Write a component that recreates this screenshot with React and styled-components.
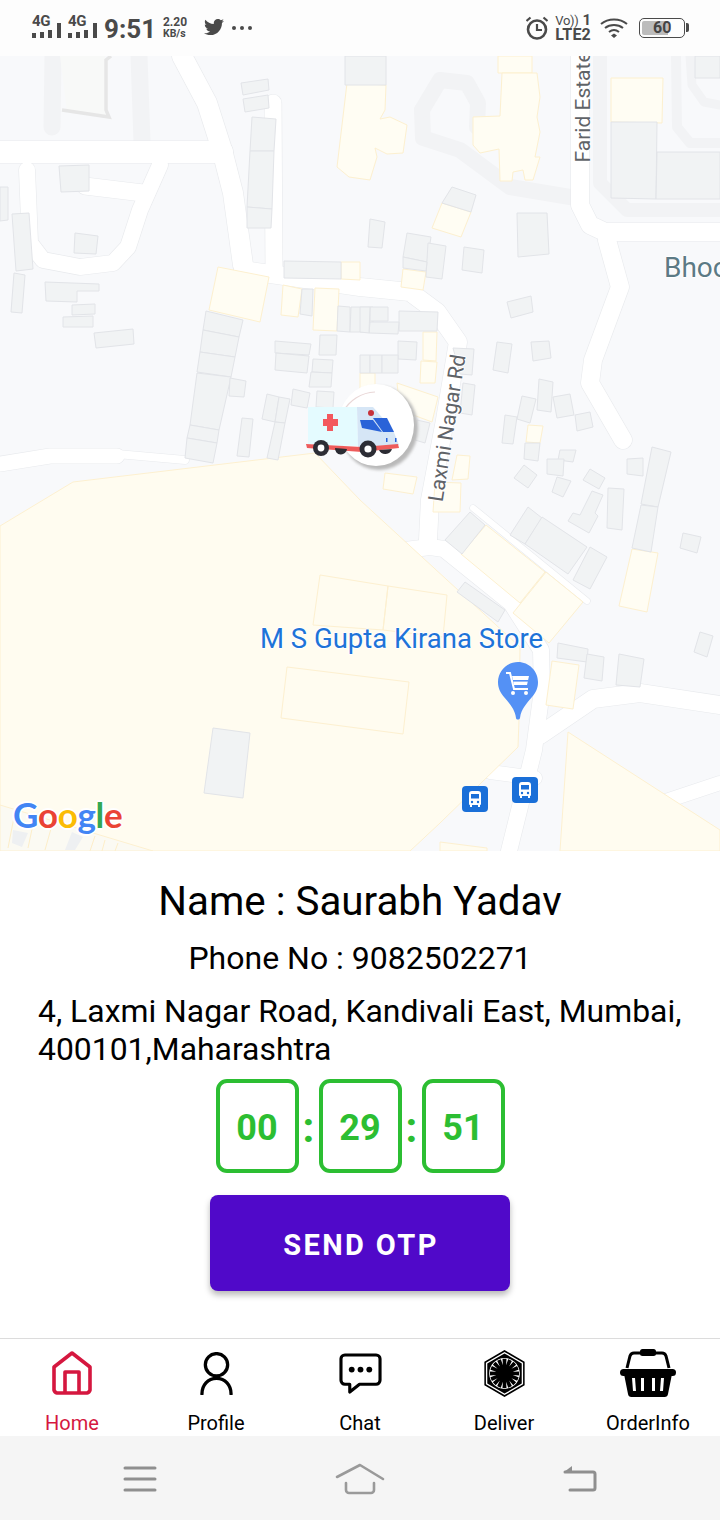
import React from "react";
import styled, { createGlobalStyle } from "styled-components";
import { FaTwitter, FaFirstOrder } from "react-icons/fa";

const Global = createGlobalStyle`
  html, body { margin: 0; padding: 0; background: #fff; }
  * { box-sizing: border-box; }
  body { font-family: Roboto, "Liberation Sans", sans-serif; }
`;

const Page = styled.div`
  width: 720px; height: 1520px; display: flex; flex-direction: column; overflow: hidden; background: #fff; color: #000;
`;

/* ---------- status bar ---------- */
const StatusBar = styled.div`
  height: 56px; flex: none; background: #fdfdfd; display: flex; justify-content: space-between; align-items: flex-start;
  padding: 0 35px 0 32px; color: #4a4a4a; font-weight: 700;
`;
const StatusGroup = styled.div`display: flex; align-items: flex-start; padding-top: ${p => p.$top || 0}px;`;
const SignalBox = styled.div`display: flex; align-items: flex-end; gap: 5px; height: 38px; margin-right: 7.4px;`;
const SignalLeft = styled.div`display: flex; flex-direction: column; width: 20px;`;
const SignalText = styled.span`font-size: 15px; line-height: 12px; letter-spacing: -0.4px;`;
const SmallBars = styled.div`display: flex; align-items: flex-end; justify-content: space-between; margin-top: 3px; height: 8px;`;
const Bar = styled.i`display: block; width: 3.6px; height: ${p => p.$h}px; background: #4a4a4a;`;
const Clock = styled.span`font-size: 26px; line-height: 30px; margin: 14px 0 0 0; width: 59px;`;
const Speed = styled.div`display: flex; flex-direction: column; font-size: 12px; line-height: 12px; width: 41px; margin-top: 16px;`;
const SpeedUnit = styled.span`font-size: 10.5px; line-height: 11px;`;
const Bird = styled.div`display: flex; margin-top: 17px; font-size: 20px; width: 28px;`;
const Dots = styled.div`display: flex; gap: 4px; margin-top: 26px;`;
const Dot = styled.i`display: block; width: 4px; height: 4px; border-radius: 50%; background: #4a4a4a;`;
const Net = styled.div`display: grid; grid-template-columns: auto auto; row-gap: 2px; margin: 15px 9px 0 7px; align-items: end;`;
const Volte = styled.span`font-size: 13px; font-weight: 400; line-height: 11px; letter-spacing: -0.3px;`;
const NetNum = styled.span`font-size: 15px; line-height: 11px; padding-left: 2px; text-align: right;`;
const Lte = styled.span`grid-column: 1 / span 2; font-size: 16px; line-height: 13px; letter-spacing: 0.2px;`;
const Battery = styled.div`
  width: 46px; height: 20px; margin: 18px 0 0 11px; border: 1.5px solid #4a4a4a; border-radius: 5px; padding: 2px;
  position: relative; display: flex;
  &::after { content: ""; position: absolute; right: -5px; top: 4px; width: 3px; height: 9px; background: #4a4a4a; border-radius: 0 2px 2px 0; }
`;
const BatteryFill = styled.div`
  width: 26px; background: #bcbcbc; border-radius: 2px 0 0 2px; font-size: 16px; line-height: 13px; display: flex;
  span { padding-left: 11px; color: #444; }
`;

/* ---------- map ---------- */
const MapArea = styled.div`height: 795px; flex: none; position: relative; overflow: hidden; background: #f8f9fb;`;
const MapSvg = styled.svg`display: block; width: 720px; height: 795px;`;
const MapLabel = styled.span`
  position: absolute; left: ${p => p.$x}px; top: ${p => p.$y}px; white-space: nowrap; font-size: ${p => p.$size}px; line-height: 1;
  color: ${p => p.$color}; transform: rotate(${p => p.$rot || 0}deg); transform-origin: 0 50%;
  text-shadow: -1px 0 #fff, 1px 0 #fff, 0 -1px #fff, 0 1px #fff;
`;
const GoogleLogo = styled.div`
  position: absolute; left: 13px; top: 733px; font-family: Lato, sans-serif; font-size: 35px; line-height: 50px; font-weight: 700; letter-spacing: -0.3px;
  text-shadow: -2px 0 #fff, 2px 0 #fff, 0 -2px #fff, 0 2px #fff;
`;
const GL = styled.span`color: ${p => p.$c};`;
const MapPin = styled.svg`position: absolute; left: ${p => p.$x}px; top: ${p => p.$y}px;`;

/* ---------- details ---------- */
const Details = styled.div`flex: 1; display: flex; flex-direction: column; align-items: center; padding-top: 28px;`;
const NameLine = styled.div`font-size: 40.3px; line-height: 46px; text-align: center;`;
const PhoneLine = styled.div`font-size: 32px; line-height: 36px; margin-top: 15px; text-align: center;`;
const AddressLine = styled.div`align-self: stretch; padding: 0 30px 0 38px; font-size: 31.9px; line-height: 38px; margin-top: 16px;`;
const Timer = styled.div`display: flex; justify-content: center; margin-top: 11px;`;
const TimeBox = styled.div`
  width: ${p => p.$w}px; height: 94px; border: 4px solid #2cbe32; border-radius: 11px; display: flex; align-items: center; justify-content: center;
  font-size: 36px; font-weight: 700; color: #2cbe32; padding-top: 4px;
`;
const Colon = styled.div`
  width: 20px; height: 94px; display: flex; align-items: center; justify-content: center; font-size: 42px; font-weight: 700; color: #2cbe32; padding-top: 2px;
`;
const OtpButton = styled.button`
  width: 300px; height: 96px; margin-top: 22px; border: 0; border-radius: 8px; background: #5009c9; color: #fff; flex: none; padding: 4px 0 0 2px;
  font-family: Roboto, sans-serif; font-size: 29px; font-weight: 700; letter-spacing: 2.4px;
  box-shadow: 0 4px 6px rgba(0,0,0,.28);
`;

/* ---------- tabs ---------- */
const TabBar = styled.div`height: 98px; flex: none; border-top: 1.5px solid #dcdcdc; display: grid; grid-template-columns: repeat(5, 1fr); background: #fff;`;
const Tab = styled.div`display: flex; flex-direction: column; align-items: center; color: ${p => p.$active ? "#d5173f" : "#000"};`;
const TabIcon = styled.div`height: 60px; display: flex; align-items: center; justify-content: center; padding-top: 8px;`;
const TabText = styled.span`font-size: 20px; line-height: 24px; margin-top: 12px;`;

/* ---------- nav ---------- */
const NavBar = styled.div`height: 84px; flex: none; background: #f5f5f5; display: grid; grid-template-columns: 280px 160px 280px;`;
const NavCell = styled.div`display: flex; align-items: flex-start; justify-content: center; padding-top: 27px;`;

const BUILDINGS = [
  [[241,83],[268,79],[269,90],[243,95]],[[243,99],[268,95],[269,108],[245,112]],[[252,117],[276,119],[274,151],[250,151]],
  [[250,151],[274,151],[272,209],[247,207]],[[247,207],[272,209],[271,228],[247,228]],[[284,261],[341,262],[341,279],[284,278]],
  [[302,289],[313,289],[312,316],[300,314]],[[338,306],[350,307],[350,332],[337,331]],[[351,307],[373,307],[373,332],[350,332]],
  [[206,311],[243,320],[239,337],[203,330]],[[203,330],[239,337],[235,357],[200,352]],[[200,352],[235,357],[231,377],[197,372]],
  [[197,373],[231,377],[219,430],[190,425]],[[190,425],[219,430],[217,443],[187,438]],[[187,438],[217,443],[213,463],[185,458]],
  [[275,341],[311,344],[309,355],[275,353]],[[276,353],[309,356],[307,373],[275,370]],[[320,335],[337,335],[336,355],[319,355]],
  [[313,359],[333,360],[332,373],[312,372]],[[311,372],[332,373],[331,387],[309,387]],[[230,378],[246,381],[244,397],[229,396]],
  [[267,394],[279,397],[275,422],[262,419]],[[279,397],[290,399],[285,423],[275,422]],[[275,422],[285,423],[278,460],[267,458]],
  [[242,418],[253,419],[249,457],[237,456]],[[293,389],[310,393],[307,408],[291,405]],[[317,391],[334,392],[333,408],[316,407]],
  [[12,214],[29,213],[33,269],[16,271]],[[0,187],[8,187],[8,220],[0,221]],[[14,273],[25,275],[22,313],[11,312]],
  [[59,166],[89,165],[89,191],[61,192]],[[75,233],[98,236],[96,254],[74,253]],[[45,282],[99,284],[99,291],[77,291],[77,302],[46,301]],
  [[72,305],[95,304],[95,314],[72,315]],[[63,317],[93,316],[93,327],[63,327]],[[94,333],[133,329],[134,344],[96,348]],
  [[611,122],[657,122],[656,199],[611,198]],[[657,152],[720,152],[720,199],[656,199]],[[695,56],[720,56],[720,78],[695,78]],
  [[345,56],[386,56],[386,85],[345,85]],[[452,187],[476,195],[471,212],[442,203]],[[370,219],[385,222],[382,248],[368,247]],
  [[407,233],[431,237],[427,262],[403,257]],[[428,243],[446,246],[442,279],[426,277]],[[403,257],[427,262],[426,271],[403,268]],
  [[464,247],[484,250],[482,273],[462,270]],[[517,213],[547,213],[549,254],[518,257]],[[507,302],[531,296],[533,312],[511,318]],
  [[497,342],[512,344],[508,373],[493,370]],[[531,342],[549,341],[551,358],[533,361]],[[539,379],[553,382],[551,412],[537,410]],
  [[522,396],[536,399],[530,423],[517,419]],[[553,397],[570,394],[574,415],[557,418]],[[575,415],[590,412],[593,427],[577,431]],
  [[505,415],[517,417],[513,444],[502,443]],[[525,443],[540,443],[538,461],[524,459]],[[560,450],[576,450],[573,462],[558,460]],
  [[652,447],[671,452],[658,507],[641,504]],[[453,348],[474,349],[472,375],[460,374]],[[463,383],[475,385],[472,415],[460,413]],
  [[398,341],[417,342],[416,360],[398,359]],[[360,355],[370,355],[370,373],[360,373]],[[370,355],[382,355],[382,373],[370,373]],
  [[382,355],[398,355],[398,373],[382,373]],[[399,311],[438,312],[437,331],[399,331]],[[370,322],[399,322],[398,334],[369,333]],
  [[370,307],[388,307],[388,321],[370,321]],[[360,307],[370,307],[369,333],[360,332]],[[417,420],[430,423],[425,443],[415,440]],
  [[524,465],[537,475],[528,488],[514,478]],[[547,459],[564,459],[563,476],[547,474]],[[557,477],[571,481],[563,497],[552,492]],
  [[590,469],[605,478],[599,489],[583,480]],[[627,459],[643,458],[643,476],[627,474]],[[608,488],[624,489],[622,530],[607,528]],
  [[592,491],[603,495],[595,513],[598,516],[589,533],[568,521],[573,513],[580,515]],[[641,505],[658,507],[651,552],[632,548]],
  [[683,533],[701,537],[697,553],[680,548]],[[700,632],[713,636],[707,657],[694,652]],[[528,507],[542,518],[525,544],[510,535]],
  [[542,517],[587,547],[568,574],[525,544]],[[590,547],[607,557],[590,589],[573,580]],[[470,512],[485,525],[462,554],[445,540]],
  [[465,582],[505,610],[498,622],[457,592]],[[558,643],[588,649],[587,662],[557,658]],[[587,654],[604,657],[602,681],[584,678]],
  [[619,654],[644,659],[640,687],[616,685]],[[213,728],[250,733],[243,798],[204,793]],
];

const YELLOWS = [
  [[341,262],[360,262],[360,280],[341,279]],[[218,267],[269,277],[260,322],[209,310]],[[283,285],[302,289],[298,317],[281,315]],
  [[315,288],[339,289],[337,331],[313,330]],[[611,78],[663,78],[662,123],[611,122]],
  [[347,83],[386,85],[385,110],[380,119],[390,117],[407,125],[403,153],[387,154],[375,148],[377,157],[370,180],[349,177],[337,167]],
  [[498,56],[532,56],[532,73],[498,73]],
  [[502,73],[537,73],[540,97],[537,117],[540,132],[535,157],[540,157],[533,180],[525,180],[523,170],[513,172],[512,181],[500,181],[499,149],[480,153],[473,145],[473,117],[500,116]],
  [[442,203],[471,212],[461,237],[432,228]],[[403,269],[426,272],[423,290],[401,287]],[[423,332],[437,332],[436,361],[423,360]],
  [[421,361],[437,362],[435,383],[420,383]],[[397,383],[438,397],[432,422],[400,410]],[[360,373],[375,373],[375,390],[360,390]],
  [[528,425],[543,426],[540,443],[526,442]],[[457,455],[470,456],[468,479],[452,480]],[[435,482],[461,483],[460,512],[433,512]],
  [[385,473],[417,477],[413,494],[383,489]],[[632,549],[658,553],[647,612],[619,606]],[[486,525],[545,572],[520,603],[461,554]],
  [[546,572],[583,602],[549,643],[513,613]],[[552,661],[579,665],[573,709],[546,705]],
];

const YELLOW_AREAS = [
  [[0,526],[73,482],[315,453],[360,500],[422,557],[520,647],[519,720],[518,747],[440,823],[410,851],[0,851]],
  [[568,732],[720,830],[720,851],[560,851]],
  [[440,842],[487,848],[487,851],[440,851]],
];
const YELLOW_OUTLINES = [
  [[320,575],[388,586],[383,630],[313,625]],[[388,586],[447,595],[443,637],[383,630]],[[287,667],[409,682],[403,734],[281,718]],
];

const GREY_ROADS = [
  { w: 16, p: [[422,110],[423,138],[460,150],[510,187],[570,197]] },
  { w: 16, p: [[422,110],[440,80],[467,83],[478,103],[477,127]] },
  { w: 14, p: [[600,56],[600,183],[627,210],[720,210]] },
  { w: 10, p: [[676,56],[677,127],[690,143],[720,143]] },
  { w: 9, p: [[690,56],[692,85],[704,102],[720,105]] },
  { w: 17, p: [[139,56],[142,142]] },
  { w: 17, p: [[53,56],[52,127]] },
];
const WHITE_ROADS = [
  { w: 22, p: [[0,152],[222,152]] },
  { w: 20, p: [[182,56],[207,103],[222,150],[233,193],[243,265]] },
  { w: 17, p: [[273,103],[274,268]] },
  { w: 18, p: [[243,270],[360,287],[410,292],[437,312],[458,342],[455,360],[445,420],[430,500],[428,540]] },
  { w: 16, p: [[27,170],[30,243],[43,260],[80,267],[113,263],[128,247],[140,210],[160,165]] },
  { w: 17, p: [[85,186],[143,193]] },
  { w: 15, p: [[0,464],[50,456],[117,456]] },
  { w: 8, p: [[117,454],[185,460]] },
  { w: 18, p: [[580,56],[580,205],[590,225],[605,232],[720,232]] },
  { w: 18, p: [[607,240],[620,287],[593,360],[590,383],[623,440]] },
  { w: 16, p: [[405,550],[430,547],[444,549],[511,603],[541,650],[542,690],[534,750],[509,851]] },
  { w: 6, p: [[473,508],[587,601]] },
  { w: 18, p: [[540,735],[593,699],[640,693],[720,705]] },
  { w: 14, p: [[660,803],[720,783]] },
  { w: 14, p: [[490,772],[535,778]] },
];

const pts = a => a.map(q => q.join(",")).join(" ");

const MapBase = () => (
  <MapSvg viewBox="0 56 720 795">
    <rect x="0" y="56" width="720" height="795" fill="#f8f9fb" />
    {GREY_ROADS.map((r, i) => <polyline key={i} points={pts(r.p)} fill="none" stroke="#f2f3f5" strokeWidth={r.w} strokeLinejoin="round" strokeLinecap="round" />)}
    {WHITE_ROADS.map((r, i) => <polyline key={i} points={pts(r.p)} fill="none" stroke="#e8eaed" strokeWidth={r.w + 1.2} strokeLinejoin="round" strokeLinecap="round" />)}
    {WHITE_ROADS.map((r, i) => <polyline key={i} points={pts(r.p)} fill="none" stroke="#ffffff" strokeWidth={r.w} strokeLinejoin="round" strokeLinecap="round" />)}
    <polygon points="60,56 105,56 105,112 109,117 67,112" fill="#f8f9f8" />
    <polyline points="111,56 106,60 106,110 109,117 62,110" fill="none" stroke="#e6e6e6" strokeWidth="3.5" />
    {YELLOW_AREAS.map((a, i) => <polygon key={i} points={pts(a)} fill="#fffcf0" stroke="#fdf0d0" strokeWidth="1" />)}
    {YELLOW_OUTLINES.map((a, i) => <polygon key={i} points={pts(a)} fill="none" stroke="#fdf0d0" strokeWidth="1" />)}
    {YELLOWS.map((a, i) => <polygon key={i} points={pts(a)} fill="#fffdf3" stroke="#fdf0cf" strokeWidth="1" />)}
    {BUILDINGS.map((a, i) => <polygon key={i} points={pts(a)} fill="#f1f3f4" stroke="#e2e4e8" strokeWidth="1" />)}
    <polygon points="0,805 153,851 0,851" fill="#fbfaf3" stroke="#fdf0d0" />
    {[[15,812,8,848],[35,815,28,848],[52,825,45,850],[95,836,90,851],[105,840,102,851],[118,843,115,851]].map((l, i) => (
      <line key={i} x1={l[0]} y1={l[1]} x2={l[2]} y2={l[3]} stroke="#fdeec9" />
    ))}
    <polygon points="13,830 28,833 22,847 12,843" fill="#eef0f2" />
    <polygon points="72,832 83,837 75,850 65,850" fill="#eef0f2" />
  </MapSvg>
);

const Ambulance = () => (
  <MapPin $x={300} $y={324} width="125" height="100" viewBox="300 380 125 100">
    <defs>
      <filter id="soft" x="-20%" y="-20%" width="140%" height="140%"><feGaussianBlur stdDeviation="1.5" /></filter>
    </defs>
    <ellipse cx="379" cy="428" rx="39" ry="42" fill="#b9b9b9" filter="url(#soft)" />
    <ellipse cx="376" cy="425" rx="38" ry="41" fill="#ffffff" />
    <path d="M343 412 A38 38 0 0 1 375 392" fill="none" stroke="#e9d7d7" strokeWidth="1.2" />
    <polygon points="308,407 357,407 358,446 308,445" fill="#e4fbff" />
    <rect x="327" y="414" width="6" height="17" fill="#f3585e" />
    <rect x="323" y="419" width="15" height="7" fill="#f3585e" />
    <polygon points="357,407 373,407 393,430 399,445 358,447" fill="#d6e6f6" />
    <polygon points="360,420 373,420 382,432 362,428" fill="#2a63d8" />
    <polygon points="373,418 387,418 394,432 383,432" fill="#2a63d8" />
    <circle cx="371" cy="413" r="3" fill="#c7323a" />
    <polygon points="306,444 362,447 398,444 399,448 362,452 307,448" fill="#ee5c5c" />
    <path d="M335 448 a6 6 0 0 0 12 1z M379 450 a7 7 0 0 0 13 -1z" fill="#2b2c33" />
    <circle cx="321" cy="448" r="8" fill="#2c2d35" />
    <circle cx="321" cy="448" r="3.4" fill="#fff" />
    <circle cx="368" cy="449" r="8.5" fill="#2c2d35" />
    <circle cx="368" cy="449" r="3.6" fill="#fff" />
    <rect x="386" y="438" width="1.5" height="4" fill="#2a63d8" />
    <rect x="395" y="438" width="1.5" height="4" fill="#2a63d8" />
  </MapPin>
);

const StorePin = () => (
  <MapPin $x={498} $y={606} width="40" height="58" viewBox="0 0 40 58">
    <path d="M20 0C9 0 0 9 0 20c0 6 2 10 6 15 5 6 11 12 12 21 .3 2 3.4 2 4 0 1-9 7-15 12-21 4-5 6-9 6-15C40 9 31 0 20 0z" fill="#5491f5" />
    <path d="M8 11h4l4 16h14" fill="none" stroke="#fff" strokeWidth="2" />
    <path d="M14 14h17l-2 9H16z" fill="#fff" />
    <rect x="15" y="18" width="15" height="1.6" fill="#5491f5" />
    <circle cx="15" cy="31" r="2" fill="#fff" />
    <circle cx="28" cy="31" r="2" fill="#fff" />
  </MapPin>
);

const BusPin = ({ x, y }) => (
  <MapPin $x={x} $y={y} width="26" height="26" viewBox="0 0 26 26">
    <rect width="26" height="26" rx="4" fill="#1a6fd8" />
    <path d="M7 8a3 3 0 0 1 3-3h6a3 3 0 0 1 3 3v10a1 1 0 0 1-1 1v2h-2v-2h-6v2H8v-2a1 1 0 0 1-1-1z" fill="#fff" />
    <rect x="9" y="8" width="8" height="4.5" fill="#1a6fd8" />
    <circle cx="10" cy="16" r="1.2" fill="#1a6fd8" />
    <circle cx="16" cy="16" r="1.2" fill="#1a6fd8" />
  </MapPin>
);

const Alarm = () => (
  <svg width="22" height="24" viewBox="1 0 22 24" fill="none" stroke="#4a4a4a" strokeWidth="2.6" style={{ marginTop: 16 }}>
    <circle cx="12" cy="13.5" r="9" />
    <path d="M12 8v6h5" strokeWidth="2.2" />
    <path d="M1.5 5 5.5 1.5M22.5 5 18.5 1.5" strokeWidth="2.2" />
  </svg>
);
const Wifi = () => (
  <svg width="28" height="22" viewBox="0 0 28 22" fill="none" stroke="#4a4a4a" strokeWidth="2" style={{ marginTop: 17 }}>
    <path d="M1 7C8 1 20 1 27 7M5 11c5-4 13-4 18 0M9 15c3-2.4 7-2.4 10 0" />
    <path d="M11 18.5l3-2 3 2-3 2.5z" fill="#4a4a4a" stroke="none" />
  </svg>
);

const Signal = () => (
  <SignalBox>
    <SignalLeft>
      <SignalText>4G</SignalText>
      <SmallBars><Bar $h={5} /><Bar $h={6} /><Bar $h={8} /></SmallBars>
    </SignalLeft>
    <Bar $h={15} />
  </SignalBox>
);

const HomeIcon = () => (
  <svg width="42" height="46" viewBox="0 0 42 46" fill="none" stroke="#d5173f" strokeWidth="3.6" strokeLinejoin="round">
    <path d="M3 17 21 3l18 14v23a4 4 0 0 1-3 3H6a4 4 0 0 1-3-3z" />
    <path d="M14 43V22h14v21" />
  </svg>
);
const PersonIcon = () => (
  <svg width="33" height="43" viewBox="0 0 34 44" fill="none" stroke="#000" strokeWidth="3.4">
    <circle cx="17" cy="13" r="11.5" />
    <path d="M2 43c0-9 6-16 15-16s15 7 15 16" strokeLinecap="round" />
  </svg>
);
const ChatIcon = () => (
  <svg width="43" height="41" viewBox="0 0 44 42" fill="none" stroke="#000" strokeWidth="3.2" strokeLinejoin="round">
    <path d="M6 2h32a4 4 0 0 1 4 4v22a4 4 0 0 1-4 4H21L11 40v-8H6a4 4 0 0 1-4-4V6a4 4 0 0 1 4-4z" />
    <circle cx="13" cy="17" r="3" fill="#000" stroke="none" />
    <circle cx="22" cy="17" r="3" fill="#000" stroke="none" />
    <circle cx="31" cy="17" r="3" fill="#000" stroke="none" />
  </svg>
);
const BasketIcon = () => (
  <svg width="56" height="48" viewBox="0 0 56 48">
    <path d="M7 19 10 7q1-3 4-3h7M49 19 46 7q-1-3-4-3h-7" fill="none" stroke="#000" strokeWidth="3" />
    <rect x="20" y="0" width="16" height="7" rx="2.5" fill="#000" />
    <rect x="0" y="20" width="56" height="7" rx="3.5" fill="#000" />
    <path d="M4 25h48l-4 20a3.5 3.5 0 0 1-3.5 3h-33a3.5 3.5 0 0 1-3.5-3z" fill="#000" />
    <path d="M12 29h3l1 13h-3zM21 29h3v13h-3zM32 29h3v13h-3zM41 29h3l-1 13h-3z" fill="#fff" />
  </svg>
);

const MenuNav = () => (
  <svg width="36" height="28" viewBox="0 0 36 28" stroke="#8f8f8f" strokeWidth="3" strokeLinecap="round" style={{ marginTop: 2 }}>
    <path d="M3 3h30M3 14h30M3 25h30" />
  </svg>
);
const HomeNav = () => (
  <svg width="50" height="32" viewBox="0 0 50 32" fill="none" stroke="#9a9a9a" strokeWidth="2.6" strokeLinecap="round" strokeLinejoin="round">
    <path d="M2 14 25 2l23 14" />
    <path d="M11 20v7a3 3 0 0 0 3 3h22a3 3 0 0 0 3-3v-7" />
  </svg>
);
const BackNav = () => (
  <svg width="36" height="28" viewBox="0 0 36 28" fill="none" stroke="#8f8f8f" strokeWidth="3" strokeLinecap="round" strokeLinejoin="round" style={{ marginTop: 1 }}>
    <path d="M3 8h28a2 2 0 0 1 2 2v14a2 2 0 0 1-2 2H8" />
    <path d="M10 2 2 8l8 0z" fill="#8f8f8f" stroke="none" />
  </svg>
);

export default function App() {
  return (
    <Page>
      <Global />
      <StatusBar>
        <StatusGroup>
          <Signal />
          <Signal />
          <Clock>9:51</Clock>
          <Speed><span>2.20</span><SpeedUnit>KB/s</SpeedUnit></Speed>
          <Bird><FaTwitter /></Bird>
          <Dots><Dot /><Dot /><Dot /></Dots>
        </StatusGroup>
        <StatusGroup>
          <Alarm />
          <Net><Volte>Vo))</Volte><NetNum>1</NetNum><Lte>LTE2</Lte></Net>
          <Wifi />
          <Battery><BatteryFill><span>60</span></BatteryFill></Battery>
        </StatusGroup>
      </StatusBar>

      <MapArea>
        <MapBase />
        <MapLabel $x={664} $y={198} $size={28} $color="#5c7a85">Bhoo</MapLabel>
        <MapLabel $x={583} $y={96} $size={21} $color="#5f6368" $rot={-90}>Farid Estate</MapLabel>
        <MapLabel $x={436} $y={435} $size={21} $color="#5f6368" $rot={-81}>Laxmi Nagar Rd</MapLabel>
        <MapLabel $x={260} $y={569} $size={27.5} $color="#1e73d8">M S Gupta Kirana Store</MapLabel>
        <Ambulance />
        <StorePin />
        <BusPin x={462} y={730} />
        <BusPin x={512} y={721} />
        <GoogleLogo>
          <GL $c="#4285f4">G</GL><GL $c="#ea4335">o</GL><GL $c="#fbbc05">o</GL><GL $c="#4285f4">g</GL><GL $c="#34a853">l</GL><GL $c="#ea4335">e</GL>
        </GoogleLogo>
      </MapArea>

      <Details>
        <NameLine>Name : Saurabh Yadav</NameLine>
        <PhoneLine>Phone No : 9082502271</PhoneLine>
        <AddressLine>4, Laxmi Nagar Road, Kandivali East, Mumbai, 400101,Maharashtra</AddressLine>
        <Timer>
          <TimeBox $w={83}>00</TimeBox>
          <Colon>:</Colon>
          <TimeBox $w={83}>29</TimeBox>
          <Colon>:</Colon>
          <TimeBox $w={83}>51</TimeBox>
        </Timer>
        <OtpButton>SEND OTP</OtpButton>
      </Details>

      <TabBar>
        <Tab $active><TabIcon><HomeIcon /></TabIcon><TabText>Home</TabText></Tab>
        <Tab><TabIcon><PersonIcon /></TabIcon><TabText>Profile</TabText></Tab>
        <Tab><TabIcon><ChatIcon /></TabIcon><TabText>Chat</TabText></Tab>
        <Tab><TabIcon><FaFirstOrder size={47} /></TabIcon><TabText>Deliver</TabText></Tab>
        <Tab><TabIcon><BasketIcon /></TabIcon><TabText>OrderInfo</TabText></Tab>
      </TabBar>

      <NavBar>
        <NavCell><MenuNav /></NavCell>
        <NavCell><HomeNav /></NavCell>
        <NavCell><BackNav /></NavCell>
      </NavBar>
    </Page>
  );
}
